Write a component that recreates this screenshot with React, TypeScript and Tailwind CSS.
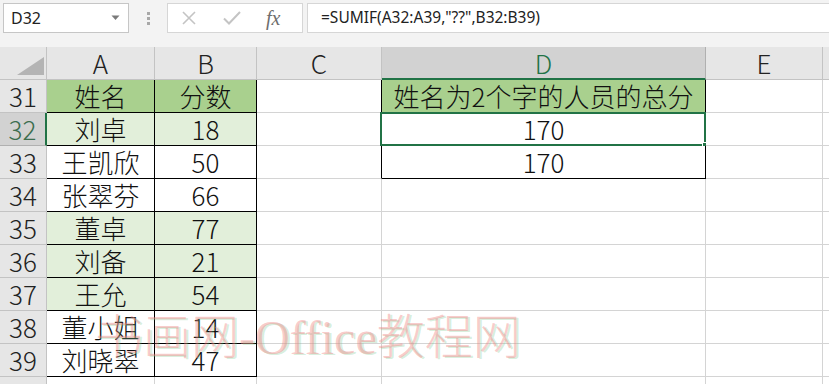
import React from 'react';

const cols = [
  { key: 'A', w: 'w-[108px]' },
  { key: 'B', w: 'w-[102px]' },
  { key: 'C', w: 'w-[125px]' },
  { key: 'D', w: 'w-[324px]' },
  { key: 'E', w: 'w-[117px]' },
  { key: 'F', w: 'w-[120px]' },
];

type Row = { n: number; a?: string; b?: string; d?: string; fill?: 'head' | 'light' };

const rows: Row[] = [
  { n: 31, a: '姓名', b: '分数', d: '姓名为2个字的人员的总分', fill: 'head' },
  { n: 32, a: '刘卓', b: '18', d: '170', fill: 'light' },
  { n: 33, a: '王凯欣', b: '50', d: '170' },
  { n: 34, a: '张翠芬', b: '66' },
  { n: 35, a: '董卓', b: '77', fill: 'light' },
  { n: 36, a: '刘备', b: '21', fill: 'light' },
  { n: 37, a: '王允', b: '54', fill: 'light' },
  { n: 38, a: '董小姐', b: '14' },
  { n: 39, a: '刘晓翠', b: '47' },
  { n: 40 },
];

function Cell({ row, col }: { row: Row; col: string }) {
  const inTable = (col === 'A' || col === 'B') && row.n <= 39;
  const inD = col === 'D' && row.n <= 33;
  const leftOfD = col === 'C' && row.n <= 33;
  const black = inTable || inD;
  let text = '';
  if (col === 'A') text = row.a ?? '';
  if (col === 'B') text = row.b ?? '';
  if (col === 'D') text = row.d ?? '';

  let bg = 'bg-white';
  if (inTable && row.fill === 'head') bg = 'bg-[#a9d08e]';
  if (inTable && row.fill === 'light') bg = 'bg-[#e2efda]';
  if (inD && row.n === 31) bg = 'bg-[#a9d08e]';

  const w = cols.find(c => c.key === col)!.w;
  const selected = col === 'D' && row.n === 32;

  return (
    <div
      className={`${w} h-full shrink-0 relative flex items-center justify-center border-r border-b ${bg} ${
        black ? 'border-black' : leftOfD ? 'border-b-[#d4d4d4] border-r-black' : 'border-[#d4d4d4]'
      }`}
    >
      <span className="leading-none text-[26px] font-light text-[#111]">{text}</span>
      {selected && (
        <>
          <div className="absolute -left-[2px] -top-[1px] -right-[1px] -bottom-[1px] border-2 border-[#217346]" />
          <div className="absolute -right-[4px] -bottom-[4px] w-[7px] h-[7px] bg-[#217346] border border-white" />
        </>
      )}
    </div>
  );
}

export default function App() {
  return (
    <div className="w-[829px] h-[384px] overflow-hidden relative bg-white font-['Noto_Sans_CJK_SC',sans-serif]">
      {/* formula bar */}
      <div className="h-[47px] bg-[#f3f3f3] flex items-start pt-[3px] pl-[3px]">
        <div className="w-[126px] h-[30px] bg-white border border-[#c6c6c6] flex items-center justify-between pl-[7px] pr-[8px]">
          <span className="text-[16px] text-[#222] font-['Noto_Sans',sans-serif]">D32</span>
          <svg width="9" height="6" viewBox="0 0 9 6">
            <path d="M0.5 0.5h8L4.5 5z" fill="#7a7a7a" />
          </svg>
        </div>
        <div className="w-[38px] h-[30px] flex flex-col items-center justify-center gap-[2px]">
          <span className="w-[3px] h-[3px] bg-[#a8a8a8]" />
          <span className="w-[3px] h-[3px] bg-[#a8a8a8]" />
          <span className="w-[3px] h-[3px] bg-[#a8a8a8]" />
        </div>
        <div className="w-[136px] h-[30px] bg-white border border-[#d6d6d6] flex items-center pl-[12px] gap-[24px]">
          <svg width="18" height="18" viewBox="0 0 18 18">
            <path d="M3 3l12 12M15 3L3 15" stroke="#c4c4c4" strokeWidth="1.6" />
          </svg>
          <svg width="20" height="18" viewBox="0 0 20 18">
            <path d="M2 9.5l5 5L18 3" stroke="#c4c4c4" strokeWidth="2" fill="none" />
          </svg>
          <span className="font-['Liberation_Serif',serif] italic text-[20px] text-[#6e6e6e] leading-none">fx</span>
        </div>
        <div className="w-[4px]" />
        <div className="flex-1 h-[30px] bg-white border border-[#d6d6d6] border-r-0 flex items-center pl-[13px]">
          <span className="text-[15.5px] text-[#222] font-['Noto_Sans',sans-serif]">=SUMIF(A32:A39,"??",B32:B39)</span>
        </div>
      </div>

      {/* column headers */}
      <div className="h-[33px] flex bg-[#e6e6e6]">
        <div className="w-[47px] h-full shrink-0 border-r border-b border-[#c3c3c3] flex items-end justify-end pr-[2px] pb-[4px]">
          <svg width="27" height="18" viewBox="0 0 27 18">
            <path d="M27 0V18H0z" fill="#b4b4b4" />
          </svg>
        </div>
        {cols.map(c => {
          const sel = c.key === 'D';
          return (
            <div
              key={c.key}
              className={`${c.w} h-full shrink-0 flex items-center justify-center border-r ${
                sel ? 'bg-[#d2d2d2] border-r-[#b0b0b0] border-b-2 border-b-[#217346] text-[#217346]' : 'border-b border-[#c3c3c3] text-[#222]'
              }`}
            >
              <span className="text-[26px] font-light leading-none">{c.key}</span>
            </div>
          );
        })}
      </div>

      {/* rows */}
      {rows.map(r => {
        const sel = r.n === 32;
        return (
          <div key={r.n} className="h-[33px] flex">
            <div
              className={`w-[47px] h-full shrink-0 flex items-center justify-center border-b ${
                sel
                  ? 'bg-[#d2d2d2] border-b-[#b0b0b0] border-r-2 border-r-[#217346] text-[#3c6e4f]'
                  : 'bg-[#e6e6e6] border-r border-[#c3c3c3] text-[#222]'
              }`}
            >
              {r.n <= 39 && <span className="text-[26px] font-light leading-none">{r.n}</span>}
            </div>
            {cols.map(c => (
              <Cell key={c.key} row={r} col={c.key} />
            ))}
          </div>
        );
      })}

      {/* watermark */}
      <div className="absolute left-[95px] top-[314px] pointer-events-none select-none font-['Liberation_Serif','Noto_Sans_CJK_SC',serif] font-light text-[48px] leading-none text-[rgba(240,130,130,0.42)] [text-shadow:2px_1px_0_rgba(120,200,140,0.3)] whitespace-nowrap">
        书画网-Office教程网
      </div>
    </div>
  );
}
